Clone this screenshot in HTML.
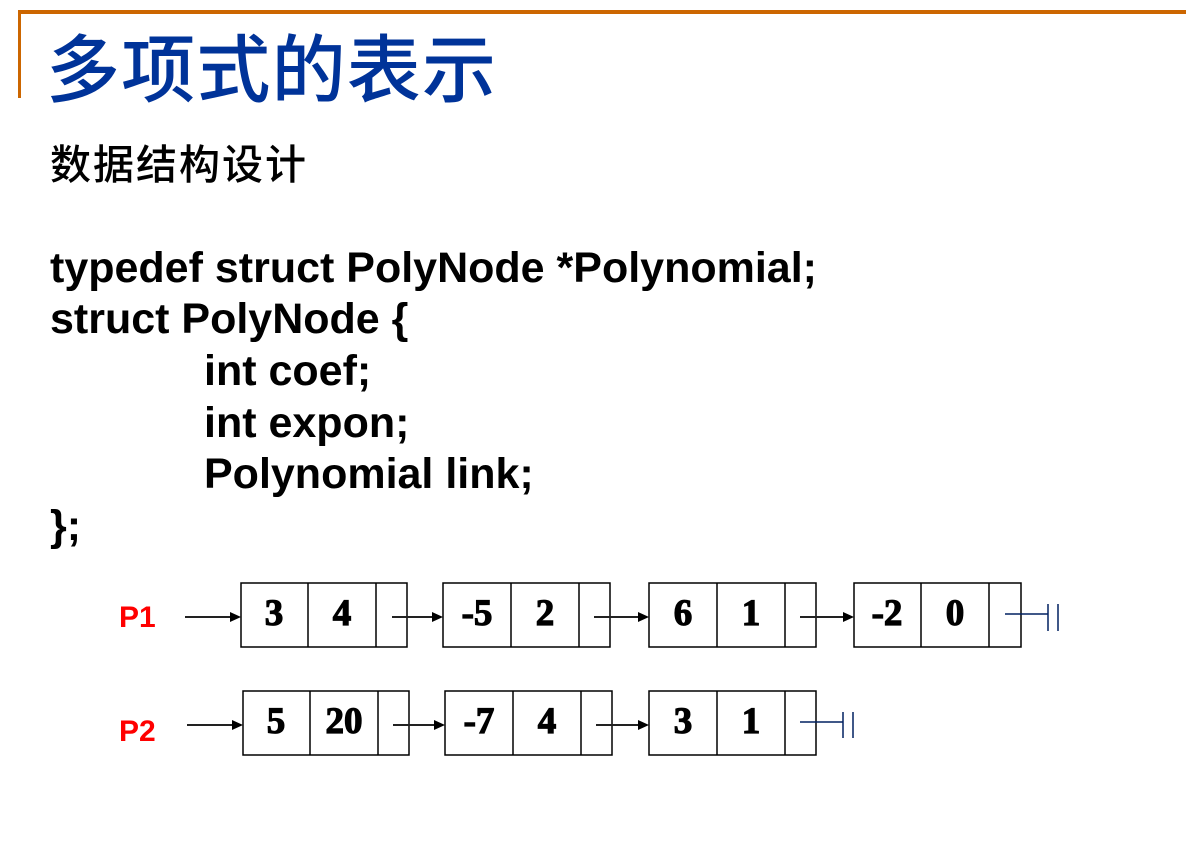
<!DOCTYPE html>
<html><head><meta charset="utf-8"><style>
html,body{margin:0;padding:0;background:#fff;width:1204px;height:850px;overflow:hidden}
svg{display:block}
</style></head><body>
<svg width="1204" height="850" xmlns="http://www.w3.org/2000/svg">
<rect x="18" y="10" width="1168" height="4" fill="#CC6600"/>
<rect x="18" y="10" width="3" height="88" fill="#CC6600"/>
<text x="46" y="96" font-family="Noto Sans CJK SC, sans-serif" font-weight="500" font-size="74" fill="#003399" textLength="450">多项式的表示</text>
<text x="50" y="179" font-family="Noto Sans CJK SC, sans-serif" font-weight="500" font-size="41" fill="#000" textLength="256">数据结构设计</text>
<g font-family="Liberation Sans, Arial, sans-serif" font-weight="bold" font-size="43" fill="#000">
<text x="50" y="282">typedef struct PolyNode *Polynomial;</text>
<text x="50" y="333">struct PolyNode {</text>
<text x="204" y="385">int coef;</text>
<text x="204" y="437">int expon;</text>
<text x="204" y="488">Polynomial link;</text>
<text x="50" y="540">};</text>
</g>
<g font-family="Liberation Sans, Arial, sans-serif" font-weight="bold" font-size="30" fill="#FF0000">
<text x="119" y="627">P1</text>
<text x="119" y="741">P2</text>
</g>
<g fill="none" stroke="#000" stroke-width="1.5">
<rect x="241" y="583" width="166" height="64"/><line x1="308" y1="583" x2="308" y2="647"/><line x1="376" y1="583" x2="376" y2="647"/>
<rect x="443" y="583" width="167" height="64"/><line x1="511" y1="583" x2="511" y2="647"/><line x1="579" y1="583" x2="579" y2="647"/>
<rect x="649" y="583" width="167" height="64"/><line x1="717" y1="583" x2="717" y2="647"/><line x1="785" y1="583" x2="785" y2="647"/>
<rect x="854" y="583" width="167" height="64"/><line x1="921" y1="583" x2="921" y2="647"/><line x1="989" y1="583" x2="989" y2="647"/>
<rect x="243" y="691" width="166" height="64"/><line x1="310" y1="691" x2="310" y2="755"/><line x1="378" y1="691" x2="378" y2="755"/>
<rect x="445" y="691" width="167" height="64"/><line x1="513" y1="691" x2="513" y2="755"/><line x1="581" y1="691" x2="581" y2="755"/>
<rect x="649" y="691" width="167" height="64"/><line x1="717" y1="691" x2="717" y2="755"/><line x1="785" y1="691" x2="785" y2="755"/>
</g>
<g stroke="#222" stroke-width="2">
<line x1="185" y1="617" x2="232" y2="617"/><line x1="392" y1="617" x2="434" y2="617"/><line x1="594" y1="617" x2="640" y2="617"/><line x1="800" y1="617" x2="845" y2="617"/>
<line x1="187" y1="725" x2="234" y2="725"/><line x1="393" y1="725" x2="436" y2="725"/><line x1="596" y1="725" x2="640" y2="725"/>
</g>
<g fill="#000">
<polygon points="241,617 230,612 230,622"/><polygon points="443,617 432,612 432,622"/><polygon points="649,617 638,612 638,622"/><polygon points="854,617 843,612 843,622"/>
<polygon points="243,725 232,720 232,730"/><polygon points="445,725 434,720 434,730"/><polygon points="649,725 638,720 638,730"/>
</g>
<g stroke="#002060" stroke-width="1.5">
<line x1="1005" y1="614" x2="1048" y2="614"/><line x1="1048" y1="604" x2="1048" y2="631"/><line x1="1058" y1="604" x2="1058" y2="631"/>
<line x1="800" y1="722" x2="843" y2="722"/><line x1="843" y1="712" x2="843" y2="738"/><line x1="853" y1="712" x2="853" y2="738"/>
</g>
<g font-family="Liberation Serif, Times New Roman, serif" font-weight="bold" font-size="37" fill="#000" stroke="#000" stroke-width="1.2" text-anchor="middle">
<text x="274" y="625">3</text><text x="342" y="625">4</text>
<text x="477" y="625">-5</text><text x="545" y="625">2</text>
<text x="683" y="625">6</text><text x="751" y="625">1</text>
<text x="887" y="625">-2</text><text x="955" y="625">0</text>
<text x="276" y="733">5</text><text x="344" y="733">20</text>
<text x="479" y="733">-7</text><text x="547" y="733">4</text>
<text x="683" y="733">3</text><text x="751" y="733">1</text>
</g>
</svg>
</body></html>
